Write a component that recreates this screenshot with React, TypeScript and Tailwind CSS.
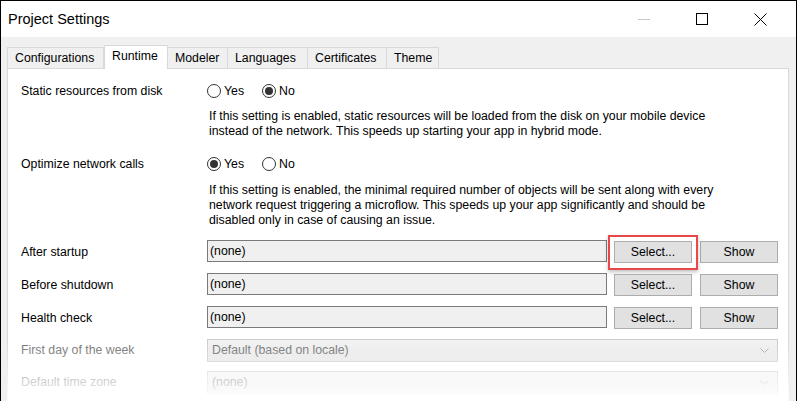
import React from 'react';

const tabs = [
  { name: 'Configurations', w: 'w-[97px]' },
  { name: 'Runtime', w: 'w-[64px]', active: true },
  { name: 'Modeler', w: 'w-[60px]' },
  { name: 'Languages', w: 'w-[80px]' },
  { name: 'Certificates', w: 'w-[79px]' },
  { name: 'Theme', w: 'w-[52px]' },
];

function Radio({ checked, label, className = '' }: { checked?: boolean; label: string; className?: string }) {
  return (
    <div className={`flex items-center ${className}`}>
      <span className="flex h-[14px] w-[14px] items-center justify-center rounded-full border border-[#333333] bg-white">
        {checked && <span className="h-[8px] w-[8px] rounded-full bg-[#333333]" />}
      </span>
      <span className="ml-[3px]">{label}</span>
    </div>
  );
}

function MicroflowRow({ label, highlight }: { label: string; highlight?: boolean }) {
  return (
    <div className="flex h-[22px] items-center">
      <div className="w-[186px] pt-[2px]">{label}</div>
      <div className="flex h-[22px] w-[400px] items-center border border-[#7a7a7a] bg-[#f0f0f0] px-[2px]">(none)</div>
      <div className="relative ml-[7px] mt-[2px]">
        <button className="flex h-[22px] w-[78px] items-center justify-center border border-[#adadad] bg-[#e1e1e1]">Select...</button>
        {highlight && (
          <span className="pointer-events-none absolute -bottom-[7px] -left-[6px] -right-[6px] -top-[6px] border-2 border-[#e8484a] shadow-[0_2px_4px_rgba(0,0,0,0.25)]" />
        )}
      </div>
      <button className="ml-[8px] mt-[2px] flex h-[22px] w-[78px] items-center justify-center border border-[#adadad] bg-[#e1e1e1]">Show</button>
    </div>
  );
}

function Dropdown({ label, value, className = '' }: { label: string; value: string; className?: string }) {
  return (
    <div className={`flex h-[23px] items-center ${className}`}>
      <div className="w-[186px] text-[#6d6d6d]">{label}</div>
      <div className="flex h-[23px] w-[571px] items-center border border-[#cccccc] bg-linear-to-b from-[#f2f2f2] to-[#e5e5e5] pl-[4px] pr-[6px] text-[#6d6d6d]">
        <span className="flex-1">{value}</span>
        <svg width="9" height="5" viewBox="0 0 9 5" className="mr-[2px]">
          <polyline points="0.5,0.5 4.5,4.5 8.5,0.5" fill="none" stroke="#a6a6a6" strokeWidth="1" />
        </svg>
      </div>
    </div>
  );
}

export default function App() {
  return (
    <div className="relative flex h-[401px] w-[797px] flex-col overflow-hidden border-l border-r border-t border-black bg-[#f0f0f0] font-['Liberation_Sans',Arial,sans-serif] text-[12.3px] text-black">
      {/* title bar */}
      <div className="flex h-[36px] shrink-0 items-center bg-white">
        <div className="ml-[7px] pt-[2px] text-[14.5px]">Project Settings</div>
        <div className="ml-auto flex h-full items-center">
          <div className="flex w-[58px] justify-center">
            <span className="h-px w-[12px] bg-[#c8c8c8]" />
          </div>
          <div className="flex w-[58px] justify-center">
            <span className="h-[12px] w-[12px] border border-black" />
          </div>
          <div className="flex w-[58px] justify-center">
            <svg width="13" height="13" viewBox="0 0 13 13">
              <line x1="0.5" y1="0.5" x2="12.5" y2="12.5" stroke="#000" strokeWidth="1" />
              <line x1="12.5" y1="0.5" x2="0.5" y2="12.5" stroke="#000" strokeWidth="1" />
            </svg>
          </div>
          <div className="w-[7px]" />
        </div>
      </div>

      {/* tabs */}
      <div className="ml-[6px] mt-[8px] flex h-[23px] shrink-0 items-end">
        {tabs.map((t, i) => (
          <div
            key={t.name}
            className={`${t.w} flex items-center border-r border-t border-[#d9d9d9] ${i === 0 ? 'border-l' : ''} ${
              t.active
                ? 'relative z-10 -mb-px h-[24px] border-l bg-white pb-[3px] pl-[7px]'
                : 'h-[21px] bg-[#f0f0f0] pl-[7px] pt-[1px]'
            }`}
          >
            {t.name}
          </div>
        ))}
      </div>

      {/* panel */}
      <div className="ml-[6px] mr-[7px] flex-1 border border-[#d9d9d9] bg-white pl-[13px]">
        <div className="mt-[12px] flex h-[20px] items-center">
          <div className="w-[186px]">Static resources from disk</div>
          <Radio label="Yes" className="mr-[18px]" />
          <Radio label="No" checked />
        </div>
        <p className="ml-[188px] mt-[8px] leading-[15px]">
          If this setting is enabled, static resources will be loaded from the disk on your mobile device
          <br />
          instead of the network. This speeds up starting your app in hybrid mode.
        </p>

        <div className="mt-[15px] flex h-[20px] items-center">
          <div className="w-[186px]">Optimize network calls</div>
          <Radio label="Yes" checked className="mr-[18px]" />
          <Radio label="No" />
        </div>
        <p className="ml-[188px] mt-[9px] leading-[15px]">
          If this setting is enabled, the minimal required number of objects will be sent along with every
          <br />
          network request triggering a microflow. This speeds up your app significantly and should be
          <br />
          disabled only in case of causing an issue.
        </p>

        <div className="mt-[12px] flex flex-col gap-[11px]">
          <MicroflowRow label="After startup" highlight />
          <MicroflowRow label="Before shutdown" />
          <MicroflowRow label="Health check" />
        </div>

        <Dropdown className="mt-[11px]" label="First day of the week" value="Default (based on locale)" />
        <Dropdown className="mt-[9px]" label="Default time zone" value="(none)" />
      </div>

      {/* bottom fade of the cropped screenshot */}
      <div className="pointer-events-none absolute bottom-0 left-[6px] right-[7px] top-[340px] bg-linear-to-b from-white/0 via-white/50 to-white" />
    </div>
  );
}
